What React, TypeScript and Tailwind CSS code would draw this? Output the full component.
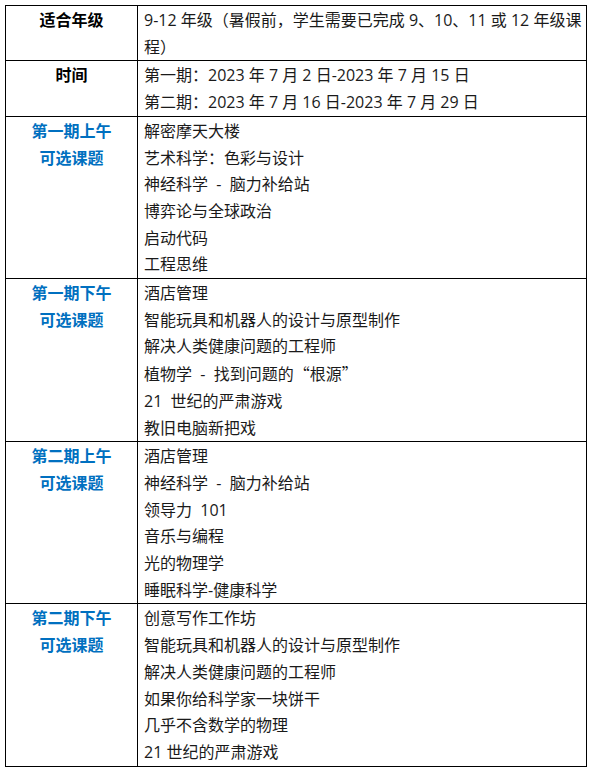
import React from "react";

const font = { fontFamily: '"Open Sans", "Noto Sans CJK SC", "Noto Sans", sans-serif' };
const cjk = { fontFamily: '"Noto Sans CJK SC", sans-serif' };

type Row = { label: string[]; blue?: boolean; lines: React.ReactNode[] };

const rows: Row[] = [
  {
    label: ["适合年级"],
    lines: ["9-12 年级（暑假前，学生需要已完成 9、10、11 或 12 年级课", "程）"],
  },
  {
    label: ["时间"],
    lines: ["第一期：2023 年 7 月 2 日-2023 年 7 月 15 日", "第二期：2023 年 7 月 16 日-2023 年 7 月 29 日"],
  },
  {
    label: ["第一期上午", "可选课题"],
    blue: true,
    lines: ["解密摩天大楼", "艺术科学：色彩与设计", "神经科学  -  脑力补给站", "博弈论与全球政治", "启动代码", "工程思维"],
  },
  {
    label: ["第一期下午", "可选课题"],
    blue: true,
    lines: [
      "酒店管理",
      "智能玩具和机器人的设计与原型制作",
      "解决人类健康问题的工程师",
      <>
        植物学  -  找到问题的<span style={cjk}>“</span>根源<span style={cjk}>”</span>
      </>,
      "21  世纪的严肃游戏",
      "教旧电脑新把戏",
    ],
  },
  {
    label: ["第二期上午", "可选课题"],
    blue: true,
    lines: ["酒店管理", "神经科学  -  脑力补给站", "领导力  101", "音乐与编程", "光的物理学", "睡眠科学-健康科学"],
  },
  {
    label: ["第二期下午", "可选课题"],
    blue: true,
    lines: ["创意写作工作坊", "智能玩具和机器人的设计与原型制作", "解决人类健康问题的工程师", "如果你给科学家一块饼干", "几乎不含数学的物理", "21 世纪的严肃游戏"],
  },
];

export default function App() {
  return (
    <div className="bg-white w-[591px] h-[772px] pt-[5px] pl-[5px]" style={font}>
      <div className="w-[582px] border border-black text-[16px] leading-[26.7px] text-[#1a1a1a]">
        {rows.map((r, i) => (
          <div key={i} className={`flex ${i > 0 ? "border-t border-black" : ""}`}>
            <div
              className={`w-[132px] shrink-0 border-r border-black text-center font-bold pt-[1px] ${
                r.blue ? "text-[#0070c0]" : "text-black"
              }`}
            >
              {r.label.map((l, j) => (
                <div key={j}>{l}</div>
              ))}
            </div>
            <div className="flex-1 pl-[6px] pt-[1px]">
              {r.lines.map((l, j) => (
                <div key={j} className="whitespace-pre">
                  {l}
                </div>
              ))}
            </div>
          </div>
        ))}
      </div>
    </div>
  );
}
